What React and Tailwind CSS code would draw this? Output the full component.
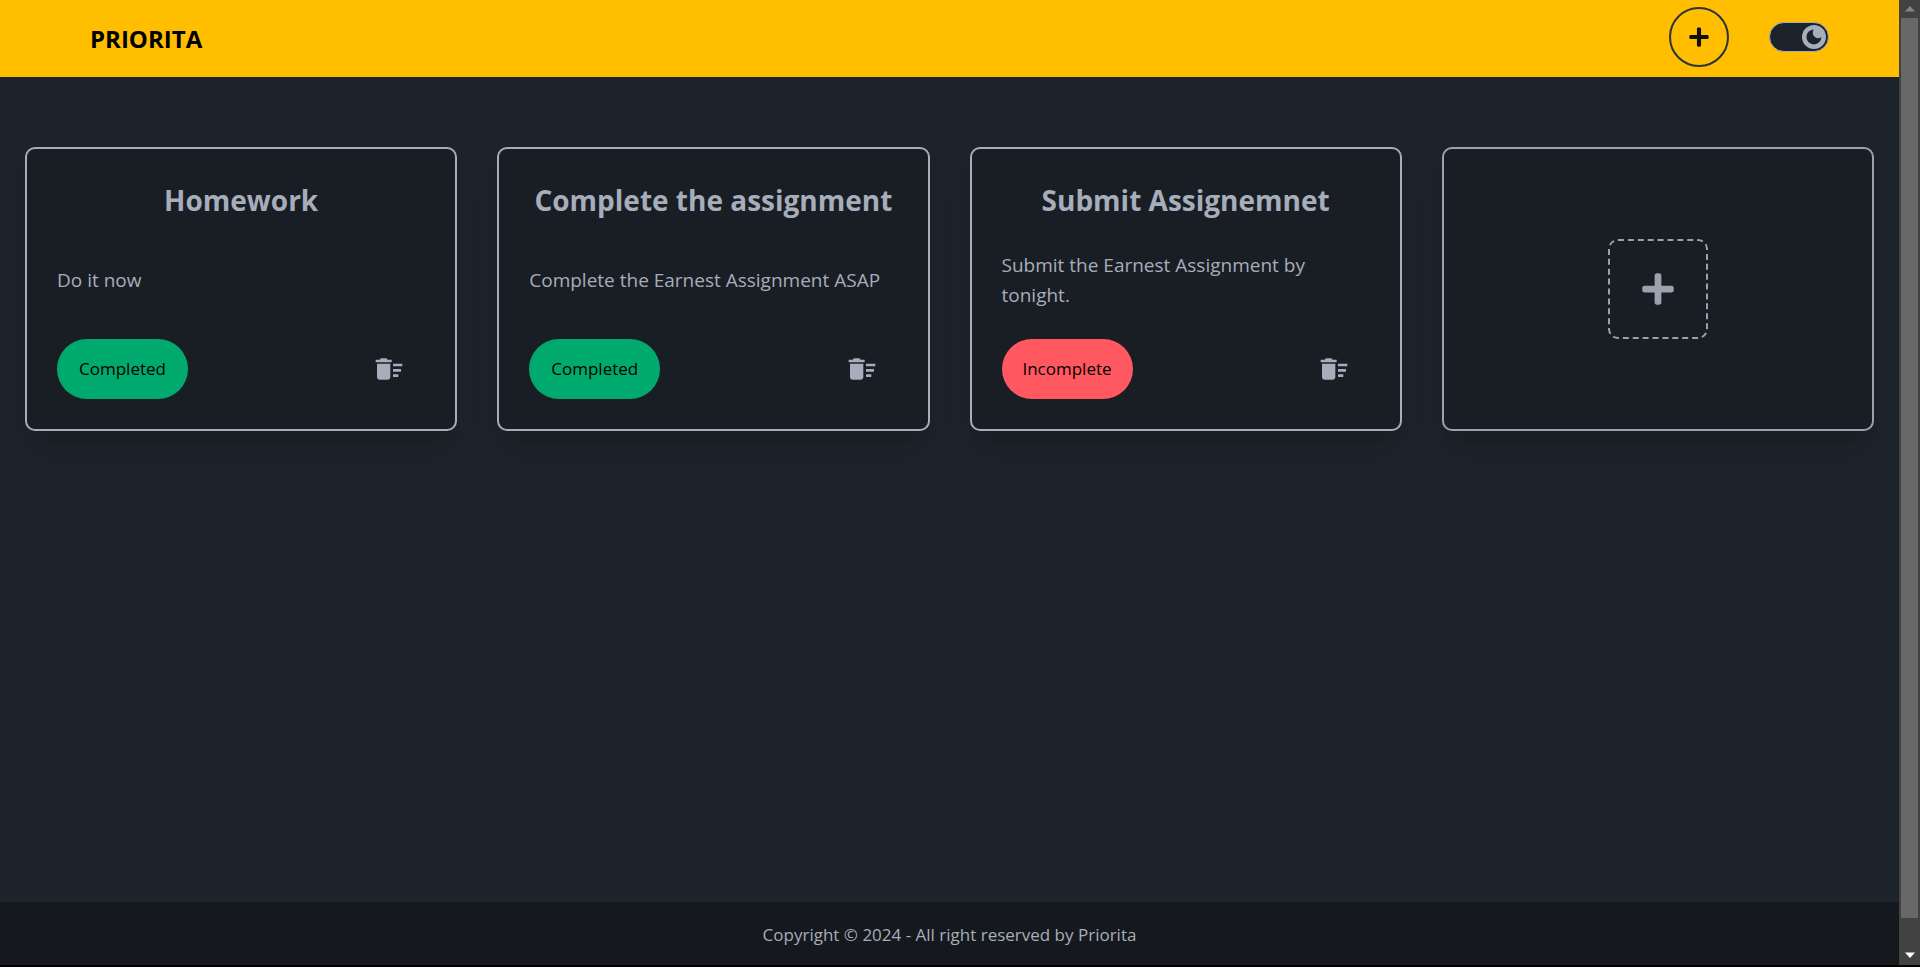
import { useState } from "react";
import { FaPlus } from "react-icons/fa";
import { MdDeleteSweep } from "react-icons/md";

const tasks = [
  { id: 1, title: "Homework", description: "Do it now", done: true },
  { id: 2, title: "Complete the assignment", description: "Complete the Earnest Assignment ASAP", done: true },
  { id: 3, title: "Submit Assignemnet", description: "Submit the Earnest Assignment by tonight.", done: false },
];

const cardShadow = "shadow-[0_25px_31px_-6px_rgba(0,0,0,0.1),0_10px_13px_-8px_rgba(0,0,0,0.1)]";

function ThemeToggle() {
  const [dark, setDark] = useState(true);
  return (
    <label className="relative flex h-[30px] w-[60px] cursor-pointer items-center justify-end rounded-full border border-[#a6adbb] bg-[#1d232a] px-[2px]">
      <input
        type="checkbox"
        aria-label="Dark theme"
        checked={dark}
        onChange={() => setDark(!dark)}
        className="absolute inset-0 cursor-pointer appearance-none rounded-full"
      />
      <svg viewBox="0 0 24 24" className="pointer-events-none size-6" aria-hidden="true">
        <circle cx="12" cy="12" r="12" fill="#a6adbb" />
        <path d="M11.6 4.4A7.5 7.5 0 1 0 19.4 12C17.6 13.6 14.8 13.6 12.8 12C10.6 10.2 10.2 7 11.6 4.4Z" fill="#1d232a" />
      </svg>
    </label>
  );
}

function Header() {
  return (
    <header className="flex min-h-[77px] items-center justify-between bg-[#ffbe00] px-[70px]">
      <a href="#home" className="px-5 text-2xl font-bold text-black">
        PRIORITA
      </a>
      <div className="flex items-center gap-10 pb-[3px]">
        <button
          type="button"
          aria-label="Add task"
          className="flex size-[60px] items-center justify-center rounded-full border-2 border-[#2a323c] text-[22px] text-[#130e00]"
        >
          <FaPlus />
        </button>
        <ThemeToggle />
      </div>
    </header>
  );
}

function TaskCard({ task }) {
  return (
    <article className={`flex flex-col rounded-[10px] border-2 border-[#a6adbb] bg-[#191e24] px-[30px] pt-[31px] pb-[30px] ${cardShadow}`}>
      <h2 className="text-center text-[28px] leading-10 font-bold">{task.title}</h2>
      <p className="flex min-h-[119px] flex-1 items-center py-[10px] text-[19px] leading-[30px]">{task.description}</p>
      <div className="flex items-center justify-between">
        <button
          type="button"
          className={`h-[60px] w-[131px] rounded-full text-[17px] font-medium text-black ${task.done ? "bg-[#00a96e]" : "bg-[#ff5861]"}`}
        >
          {task.done ? "Completed" : "Incomplete"}
        </button>
        <button type="button" aria-label={`Delete ${task.title}`} className="flex h-[60px] items-center px-5 text-[32px]">
          <MdDeleteSweep />
        </button>
      </div>
    </article>
  );
}

function AddCard() {
  return (
    <article className={`flex items-center justify-center rounded-[10px] border-2 border-[#9ba2af] bg-[#191e24] p-[30px] ${cardShadow}`}>
      <button
        type="button"
        aria-label="Create a new task"
        className="flex size-[100px] items-center justify-center rounded-[10px] border-2 border-dashed border-[#9ba2af] text-4xl text-[#9ba2af]"
      >
        <FaPlus />
      </button>
    </article>
  );
}

function ScrollRail() {
  return (
    <div className="flex w-[21px] shrink-0 flex-col bg-[#424242] px-[2px]" aria-hidden="true">
      <div className="flex h-[18px] items-center justify-center">
        <svg viewBox="0 0 10 6" className="h-[6px] w-[10px]" fill="#868686">
          <path d="M5 0L10 5.5H0Z" />
        </svg>
      </div>
      <div className="flex-1 bg-[#686868]" />
      <div className="flex h-[47px] items-end justify-center pb-[7px]">
        <svg viewBox="0 0 10 6" className="h-[6px] w-[10px]" fill="#ffffff">
          <path d="M0 0.5H10L5 6Z" />
        </svg>
      </div>
    </div>
  );
}

export default function App() {
  return (
    <div className="flex min-h-screen border-b-2 border-black bg-[#1d232a] font-['Open_Sans','Noto_Sans',sans-serif] text-[#a6adbb]">
      <div className="flex min-w-0 flex-1 flex-col">
        <Header />
        <main className="grid flex-1 grid-cols-1 content-start gap-10 px-[25px] py-[70px] md:grid-cols-2 xl:grid-cols-4">
          {tasks.map((task) => (
            <TaskCard key={task.id} task={task} />
          ))}
          <AddCard />
        </main>
        <footer className="bg-[#15191e] pt-[20px] pb-[18px] text-center text-[17px] leading-[25px]">
          <p>Copyright © 2024 - All right reserved by Priorita</p>
        </footer>
      </div>
      <ScrollRail />
    </div>
  );
}
